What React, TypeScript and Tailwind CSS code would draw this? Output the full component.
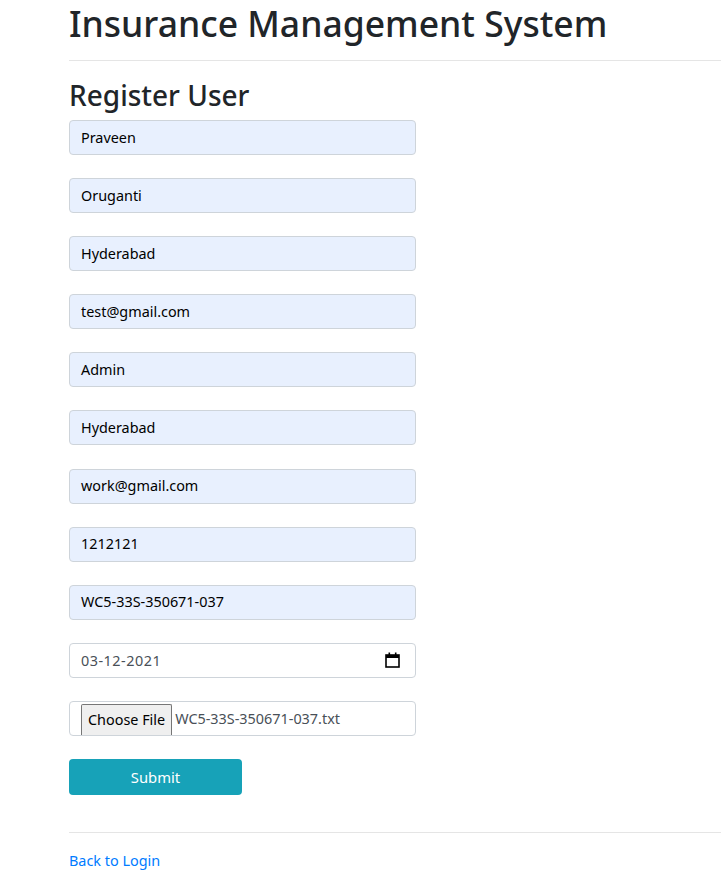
import React from "react";

const values = [
  "Praveen",
  "Oruganti",
  "Hyderabad",
  "test@gmail.com",
  "Admin",
  "Hyderabad",
  "work@gmail.com",
  "1212121",
  "WC5-33S-350671-037",
];

function CalendarIcon() {
  return (
    <svg width="15" height="16" viewBox="0 0 15 16" fill="none">
      <rect x="1" y="3" width="13" height="12" stroke="#000" strokeWidth="1.6" fill="none" />
      <rect x="1" y="3" width="13" height="3" fill="#000" />
      <rect x="3.5" y="0.5" width="1.6" height="3" fill="#000" />
      <rect x="9.9" y="0.5" width="1.6" height="3" fill="#000" />
    </svg>
  );
}

export default function App() {
  return (
    <div
      className="bg-white text-[#212529] pl-[69px] pt-0 min-h-[886px]"
      style={{ fontFamily: '"Noto Sans", "Open Sans", sans-serif' }}
    >
      <h1 className="text-[35.5px] leading-[44px] font-medium m-0 pt-[1px]">
        Insurance Management System
      </h1>
      <div className="mt-[15px] border-t border-[#e5e5e5]" />
      <h2 className="text-[28px] leading-[35px] font-medium mt-[17px] mb-[7px]">
        Register User
      </h2>
      <div className="flex flex-col gap-[23.1px] w-[347px]">
        {values.map((v, i) => (
          <div
            key={i}
            className="h-[35px] rounded-[4px] border border-[#ced4da] bg-[#e8f0fe] flex items-center pl-[11px] text-[14.4px] text-black"
          >
            {v}
          </div>
        ))}
        <div className="h-[35px] rounded-[4px] border border-[#ced4da] bg-white flex items-center pl-[11px] pr-[15px] text-[14.4px] text-[#495057]">
          <span className="flex-1 tracking-[0.5px]">03-12-2021</span>
          <CalendarIcon />
        </div>
        <div className="h-[35px] rounded-[4px] border border-[#ced4da] bg-white flex items-end pl-[11px] text-[14.4px] text-[#495057] overflow-hidden">
          <div className="h-[31px] px-[6px] border border-[#767676] bg-[#efefef] text-black flex items-center rounded-t-[2px] border-b-0">
            Choose File
          </div>
          <span className="ml-[3px] self-center">WC5-33S-350671-037.txt</span>
        </div>
      </div>
      <button className="mt-[23px] w-[173px] h-[36px] rounded-[4px] bg-[#17a2b8] text-white text-[14.8px] flex items-center justify-center">
        Submit
      </button>
      <div className="mt-[37px] border-t border-[#e5e5e5]" />
      <div className="mt-[17px] text-[14.4px] text-[#007bff]">Back to Login</div>
    </div>
  );
}
